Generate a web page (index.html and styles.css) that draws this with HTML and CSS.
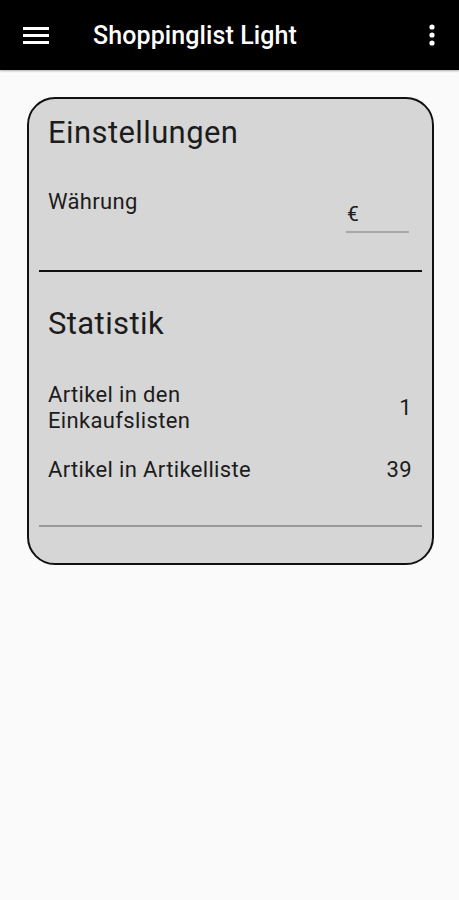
FILE: index.html
```html
<!DOCTYPE html>
<html lang="de">
<head>
  <meta charset="UTF-8">
  <title>Shoppinglist Light - Einstellungen</title>
  <link rel="stylesheet" href="styles.css">
</head>
<body>

  <header class="toolbar">
    <button class="icon-btn" aria-label="Menü">
      <svg width="26" height="20" viewBox="0 0 26 20">
        <rect x="0" y="2" width="26" height="3" fill="#fff"/>
        <rect x="0" y="9" width="26" height="3" fill="#fff"/>
        <rect x="0" y="16" width="26" height="3" fill="#fff"/>
      </svg>
    </button>
    <span class="toolbar-title">Shoppinglist Light</span>
    <button class="icon-btn more-btn" aria-label="Mehr">
      <svg width="6" height="22" viewBox="0 0 6 22">
        <circle cx="3" cy="3" r="2.6" fill="#fff"/>
        <circle cx="3" cy="11" r="2.6" fill="#fff"/>
        <circle cx="3" cy="19" r="2.6" fill="#fff"/>
      </svg>
    </button>
  </header>

  <main class="content">
    <section class="card">
      <h2 class="section-title">Einstellungen</h2>

      <div class="row row-currency">
        <span class="label">Währung</span>
        <div class="currency-field">€</div>
      </div>

      <hr class="divider">

      <h2 class="section-title title-stats">Statistik</h2>

      <div class="row">
        <span class="label">Artikel in den<br>Einkaufslisten</span>
        <span class="value">1</span>
      </div>
      <div class="row row-next">
        <span class="label">Artikel in Artikelliste</span>
        <span class="value">39</span>
      </div>

      <hr class="divider divider-light">
    </section>
  </main>

</body>
</html>
```

FILE: styles.css
```css
* {
  box-sizing: border-box;
}

body {
  margin: 0;
  font-family: Roboto, 'Noto Sans', sans-serif;
  background: #fafafa;
  color: #1c1c1c;
}

.toolbar {
  display: flex;
  align-items: center;
  height: 70px;
  background: #000;
  color: #fff;
  padding: 0 14px 0 23px;
  box-shadow: 0 1px 2px rgba(0, 0, 0, 0.3);
}

.icon-btn {
  background: none;
  border: none;
  padding: 0;
  display: flex;
  align-items: center;
  cursor: pointer;
}

.toolbar-title {
  flex: 1;
  margin-left: 44px;
  font-size: 25px;
  font-weight: 500;
  letter-spacing: 0.1px;
}

.more-btn {
  margin-right: 10px;
}

.content {
  padding: 27px 25px 0 27px;
}

.card {
  background: #d6d6d6;
  border: 2px solid #111;
  border-radius: 28px;
  padding: 16px 10px 36px 10px;
}

.section-title {
  margin: 0 0 0 9px;
  font-size: 31px;
  font-weight: 400;
  line-height: 36px;
  letter-spacing: 0.4px;
}

.title-stats {
  margin-top: 34px;
}

.row {
  display: flex;
  justify-content: space-between;
  align-items: center;
  padding: 0 10px 0 9px;
  font-size: 22px;
  line-height: 26px;
  letter-spacing: 0.35px;
}

.row-currency {
  align-items: flex-start;
  margin-top: 37px;
  line-height: 27px;
}

.currency-field {
  width: 63px;
  margin: 14px 3px 0 0;
  padding: 0 0 4px 1px;
  border-bottom: 2px solid #a8a8a8;
  font-size: 21px;
  line-height: 25px;
  letter-spacing: 0;
}

.title-stats + .row {
  margin-top: 40px;
}

.row-next {
  margin-top: 23px;
}

.divider {
  border: none;
  border-top: 2px solid #111;
  margin: 37px 0 0 0;
}

.divider-light {
  border-top-color: #9a9a9a;
  margin-top: 42px;
}
```
